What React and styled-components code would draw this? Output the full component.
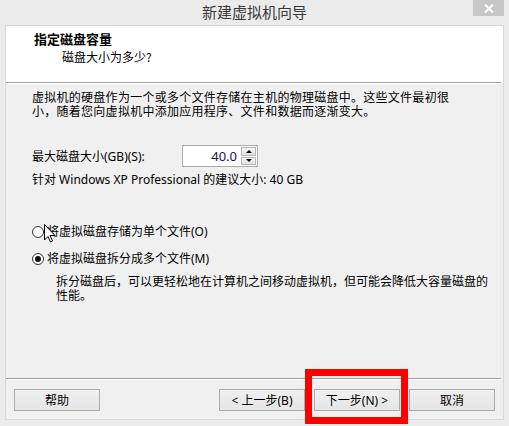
import React from "react";
import styled, { createGlobalStyle } from "styled-components";

const Global = createGlobalStyle`
  html, body {
    margin: 0;
    padding: 0;
    background: #ebebeb;
  }
  body {
    font-family: "Noto Sans", "Noto Sans CJK SC", sans-serif;
    font-size: 12px;
    color: #000;
  }
`;

const Window = styled.div`
  position: relative;
  width: 509px;
  height: 426px;
  background: #ebebeb;
  display: flex;
  flex-direction: column;
  overflow: hidden;
`;

const TitleBar = styled.div`
  height: 25px;
  display: grid;
  grid-template-columns: 1fr auto 1fr;
  align-items: start;
`;

const Title = styled.div`
  grid-column: 2;
  font-family: "Noto Sans CJK SC", sans-serif;
  font-size: 15px;
  line-height: 24px;
  color: #3a3a3a;
`;

const CloseButton = styled.div`
  grid-column: 3;
  justify-self: end;
  margin-right: 5px;
  width: 31px;
  height: 16px;
  background: #c7c7c7;
  display: flex;
  align-items: center;
  justify-content: center;
`;

const Panel = styled.div`
  margin: 0 5px 6px 5px;
  flex: 1;
  border: 1px solid #d9d9d9;
  background: #f0f0f0;
  display: flex;
  flex-direction: column;
`;

const Header = styled.div`
  background: #fff;
  height: 56px;
  padding: 4px 0 0 28px;
  box-sizing: border-box;
`;

const HeaderTitle = styled.div`
  font-family: "Noto Sans CJK SC", sans-serif;
  font-weight: bold;
  font-size: 13px;
  line-height: 18px;
`;

const HeaderSub = styled.div`
  font-family: "Noto Sans CJK SC", sans-serif;
  font-size: 12px;
  line-height: 18px;
  margin-left: 28px;
`;

const Rule = styled.div`
  height: 1px;
  background: #a0a0a0;
  border-bottom: 1px solid #fff;
  margin: 0 2px 0 0;
`;

const Body = styled.div`
  flex: 1;
  padding: 7px 10px 0 26px;
  display: flex;
  flex-direction: column;
`;

const Text = styled.div`
  line-height: 14px;
  white-space: nowrap;
  margin-top: ${(p) => p.$mt || 0}px;
  margin-left: ${(p) => p.$ml || 0}px;
  letter-spacing: ${(p) => p.$ls || 0}px;
`;

const SizeRow = styled.div`
  display: flex;
  align-items: center;
  margin-top: 26px;
  height: 22px;
`;

const SizeLabel = styled.div`
  width: 150px;
`;

const SpinBox = styled.div`
  width: 76px;
  height: 22px;
  box-sizing: border-box;
  border: 1px solid #ababab;
  background: #fff;
  display: flex;
  align-items: stretch;
`;

const SpinValue = styled.div`
  flex: 1;
  text-align: right;
  padding-right: 4px;
  line-height: 20px;
  font-size: 13px;
  color: #14145a;
`;

const SpinButtons = styled.div`
  width: 15px;
  display: flex;
  flex-direction: column;
  gap: 1px;
  padding: 1px 1px 1px 0;
`;

const SpinBtn = styled.div`
  flex: 1;
  border: 1px solid #b5b5b5;
  background: linear-gradient(#f4f4f4, #e2e2e2);
  display: flex;
  align-items: center;
  justify-content: center;
`;

const Arrow = styled.div`
  width: 0;
  height: 0;
  border-left: 3px solid transparent;
  border-right: 3px solid transparent;
  ${(p) =>
    p.$up ? "border-bottom: 3px solid #000;" : "border-top: 3px solid #000;"}
`;

const RadioRow = styled.div`
  display: flex;
  align-items: center;
  gap: 3px;
  margin-top: ${(p) => p.$mt}px;
  height: 14px;
  line-height: 14px;
  white-space: nowrap;
`;

const Radio = styled.div`
  width: 12px;
  height: 12px;
  box-sizing: border-box;
  border-radius: 50%;
  border: 1px solid #333;
  background: #fff;
  display: flex;
  align-items: center;
  justify-content: center;
  &::after {
    content: "";
    width: 6px;
    height: 6px;
    border-radius: 50%;
    background: ${(p) => (p.$checked ? "#111" : "transparent")};
  }
`;

const Footer = styled.div`
  height: 39px;
  padding: 9px 8px 0 8px;
  box-sizing: border-box;
  display: flex;
  gap: 9px;
`;

const Button = styled.div`
  width: 86px;
  height: 22px;
  box-sizing: border-box;
  border: 1px solid #acacac;
  background: linear-gradient(#f0f0f0, #e5e5e5);
  display: flex;
  align-items: center;
  justify-content: center;
  font-size: 12px;
  white-space: nowrap;
  margin-right: ${(p) => (p.$push ? "auto" : "0")};
`;

const Highlight = styled.div`
  position: absolute;
  left: 305px;
  top: 369px;
  width: 103px;
  height: 55px;
  box-sizing: border-box;
  border: 7px solid #ff0000;
`;

const Cursor = styled.svg`
  position: absolute;
  left: 44px;
  top: 224px;
`;

export default function App() {
  return (
    <>
      <Global />
      <Window>
        <TitleBar>
          <Title>新建虚拟机向导</Title>
          <CloseButton>
            <svg width="10" height="9" viewBox="0 0 10 9">
              <path d="M1 0.5 L9 8.5 M9 0.5 L1 8.5" stroke="#fff" strokeWidth="2" />
            </svg>
          </CloseButton>
        </TitleBar>
        <Panel>
          <Header>
            <HeaderTitle>指定磁盘容量</HeaderTitle>
            <HeaderSub>磁盘大小为多少?</HeaderSub>
          </Header>
          <Rule />
          <Body>
            <Text $ls={0.27}>
              虚拟机的硬盘作为一个或多个文件存储在主机的物理磁盘中。这些文件最初很
            </Text>
            <Text $ls={0.27}>小，随着您向虚拟机中添加应用程序、文件和数据而逐渐变大。</Text>
            <SizeRow>
              <SizeLabel>最大磁盘大小(GB)(S):</SizeLabel>
              <SpinBox>
                <SpinValue>40.0</SpinValue>
                <SpinButtons>
                  <SpinBtn>
                    <Arrow $up />
                  </SpinBtn>
                  <SpinBtn>
                    <Arrow />
                  </SpinBtn>
                </SpinButtons>
              </SpinBox>
            </SizeRow>
            <Text $mt={6}>针对 Windows XP Professional 的建议大小: 40 GB</Text>
            <RadioRow $mt={38}>
              <Radio />
              <span>将虚拟磁盘存储为单个文件(O)</span>
            </RadioRow>
            <RadioRow $mt={13}>
              <Radio $checked />
              <span>将虚拟磁盘拆分成多个文件(M)</span>
            </RadioRow>
            <Text $mt={9} $ml={24}>
              拆分磁盘后，可以更轻松地在计算机之间移动虚拟机，但可能会降低大容量磁盘的
            </Text>
            <Text $ml={24}>性能。</Text>
          </Body>
          <Rule />
          <Footer>
            <Button $push>帮助</Button>
            <Button>&lt; 上一步(B)</Button>
            <Button>下一步(N) &gt;</Button>
            <Button>取消</Button>
          </Footer>
        </Panel>
        <Highlight />
        <Cursor width="12" height="19" viewBox="0 0 12 19">
          <path
            d="M0.5 0.5 L0.5 16 L4 12.5 L6.5 18 L8.5 17 L6 11.5 L11 11.5 Z"
            fill="#fff"
            stroke="#000"
            strokeWidth="1"
          />
        </Cursor>
      </Window>
    </>
  );
}
